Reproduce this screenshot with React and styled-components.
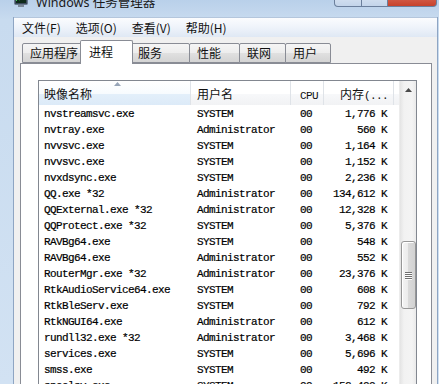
import React from 'react'
import styled, { createGlobalStyle } from 'styled-components'

const GlobalStyle = createGlobalStyle`
  html, body {
    margin: 0;
    padding: 0;
  }
  body {
    width: 439px;
    height: 384px;
    overflow: hidden;
    background: #cadcf0;
  }
`

const Window = styled.div`
  width: 439px;
  height: 384px;
  overflow: hidden;
  display: flex;
  flex-direction: column;
  background: linear-gradient(180deg, #b9d0ea 0px, #c8dbef 20px, #d2e2f3 100%);
  font-family: "Noto Sans CJK SC", sans-serif;
`

const TitleBar = styled.div`
  flex: none;
  height: 17px;
  display: flex;
  align-items: flex-start;
  padding-left: 14px;
  overflow: hidden;
`

const AppIcon = styled.svg`
  flex: none;
  margin-top: -6px;
`

const Title = styled.div`
  margin: -6px 0 0 8px;
  font-family: "Noto Sans", "Noto Sans CJK SC", sans-serif;
  font-size: 12.5px;
  line-height: 17px;
  color: #1b1b1b;
  white-space: nowrap;
`

const Controls = styled.div`
  margin: -13px 2px 0 auto;
  height: 20px;
  display: flex;
`

const CtrlButton = styled.div`
  width: ${p => p.w}px;
  box-sizing: border-box;
  border: 1px solid #6b7f9c;
  border-top: none;
  margin-left: -1px;
  background: ${p => p.close
    ? 'linear-gradient(180deg, #e9a899 0%, #d5634f 50%, #c7422c 100%)'
    : 'linear-gradient(180deg, #e9f0f9 0%, #d6e2f1 50%, #c3d4ea 100%)'};
  border-radius: ${p => p.first ? '0 0 0 4px' : p.close ? '0 0 4px 0' : '0'};
`

const Client = styled.div`
  flex: 1;
  min-height: 0;
  margin: 0 1px 0 13px;
  border-left: 1px solid #8ea5c3;
  border-right: 1px solid #8ea5c3;
  background: #f0f0f0;
  display: flex;
  flex-direction: column;
`

const MenuBar = styled.div`
  flex: none;
  height: 19px;
  display: flex;
  align-items: center;
  gap: 15px;
  padding-left: 8px;
  border-top: 1px solid #b4c6dc;
  background: linear-gradient(180deg, #fbfcfe 0%, #eef3fa 50%, #dfe8f4 100%);
`

const MenuItem = styled.span`
  font-size: 12px;
  line-height: 19px;
  color: #111;
`

const Body = styled.div`
  flex: 1;
  min-height: 0;
  display: flex;
  flex-direction: column;
  padding: 3px 5px 0 6px;
`

const TabStrip = styled.div`
  flex: none;
  height: 23px;
  display: flex;
  align-items: flex-end;
  padding-left: 2px;
`

const Tab = styled.div`
  position: relative;
  box-sizing: border-box;
  width: ${p => (p.active ? p.w + 4 : p.w)}px;
  height: ${p => (p.active ? 24 : 20)}px;
  margin: ${p => (p.active ? '0 -3px -1px -2px' : '0 -1px 0 0')};
  padding: ${p => (p.active ? '0 0 2px 8px' : '0 0 0 7px')};
  border: 1px solid #898c95;
  border-bottom: ${p => (p.active ? 'none' : '1px solid #898c95')};
  border-radius: 2px 2px 0 0;
  background: ${p => p.active
    ? '#ffffff'
    : 'linear-gradient(180deg, #f5f5f5 0%, #ededed 50%, #e0e0e0 51%, #d4d4d4 100%)'};
  z-index: ${p => (p.active ? 1 : 0)};
  font-size: 12px;
  line-height: ${p => (p.active ? 21 : 18)}px;
  color: #111;
  white-space: nowrap;
`

const Panel = styled.div`
  flex: 1;
  min-height: 0;
  display: flex;
  flex-direction: column;
  padding: 16px 14px 0 17px;
  border: 1px solid #898c95;
  border-bottom: none;
  background: #ffffff;
`

const ListView = styled.div`
  flex: 1;
  min-height: 0;
  display: grid;
  grid-template-columns: 1fr 17px;
  border: 1px solid #828790;
  border-bottom: none;
  overflow: hidden;
`

const Table = styled.div`
  display: flex;
  flex-direction: column;
  min-width: 0;
`

const columns = '152px 100px 33px 70px 1fr'

const HeaderRow = styled.div`
  flex: none;
  height: 24px;
  display: grid;
  grid-template-columns: ${columns};
`

const HeaderCell = styled.div`
  display: flex;
  flex-direction: column;
  box-sizing: border-box;
  border-right: ${p => (p.last ? 'none' : '1px solid #dfe3e8')};
  padding: ${p => (p.right ? '0 5px 0 0' : `0 0 0 ${p.pad}px`)};
  text-align: ${p => (p.right ? 'right' : 'left')};
  background: ${p => p.sorted
    ? 'linear-gradient(180deg, #ffffff 0%, #f7fbfe 55%, #e3effa 56%, #dceaf8 100%)'
    : 'linear-gradient(180deg, #ffffff 0%, #ffffff 55%, #f7f8fa 56%, #f1f2f4 100%)'};
`

const SortSlot = styled.div`
  height: 5px;
  display: flex;
  justify-content: center;
  align-items: flex-end;
`

const HeaderText = styled.div`
  font-size: 12px;
  line-height: 16px;
  color: #111;
  white-space: nowrap;
`

const Mono = styled.span`
  font-family: "Liberation Mono", monospace;
  font-size: 11px;
  letter-spacing: -0.6px;
`

const Rows = styled.div`
  padding-top: 1px;
`

const Row = styled.div`
  height: 16px;
  display: grid;
  grid-template-columns: ${columns};
  font-family: "Liberation Mono", "Noto Sans CJK SC", monospace;
  font-size: 11px;
  letter-spacing: -0.6px;
  line-height: 16px;
  color: #000;
  -webkit-text-stroke: 0.2px #000;
`

const Cell = styled.div`
  white-space: nowrap;
  overflow: hidden;
  padding: ${p => (p.right ? '0 7px 0 0' : `0 0 0 ${p.pad}px`)};
  text-align: ${p => (p.right ? 'right' : 'left')};
`

const ScrollBar = styled.div`
  display: flex;
  flex-direction: column;
  align-items: center;
  background: linear-gradient(90deg, #e4e4e4 0%, #f2f2f2 25%, #f4f4f4 75%, #eaeaea 100%);
  border-left: 1px solid #ececec;
`

const ScrollButton = styled.div`
  flex: none;
  width: 100%;
  height: 17px;
  display: flex;
  align-items: center;
  justify-content: center;
`

const Thumb = styled.div`
  flex: none;
  box-sizing: border-box;
  width: 15px;
  height: 68px;
  margin-top: ${p => p.offset}px;
  border: 1px solid #979797;
  border-radius: 3px;
  background: linear-gradient(90deg, #f4f4f4 0%, #ececec 45%, #dadada 50%, #d2d2d2 100%);
  box-shadow: inset 1px 1px 0 #ffffff;
  display: flex;
  flex-direction: column;
  align-items: center;
  justify-content: center;
  gap: 1px;
`

const Grip = styled.div`
  width: 7px;
  height: 1px;
  background: #6f6f6f;
  box-shadow: 0 1px 0 #fdfdfd;
`

const processes = [
  ['nvstreamsvc.exe', 'SYSTEM', '00', '1,776 K'],
  ['nvtray.exe', 'Administrator', '00', '560 K'],
  ['nvvsvc.exe', 'SYSTEM', '00', '1,164 K'],
  ['nvvsvc.exe', 'SYSTEM', '00', '1,152 K'],
  ['nvxdsync.exe', 'SYSTEM', '00', '2,236 K'],
  ['QQ.exe *32', 'Administrator', '00', '134,612 K'],
  ['QQExternal.exe *32', 'Administrator', '00', '12,328 K'],
  ['QQProtect.exe *32', 'SYSTEM', '00', '5,376 K'],
  ['RAVBg64.exe', 'SYSTEM', '00', '548 K'],
  ['RAVBg64.exe', 'Administrator', '00', '552 K'],
  ['RouterMgr.exe *32', 'Administrator', '00', '23,376 K'],
  ['RtkAudioService64.exe', 'SYSTEM', '00', '608 K'],
  ['RtkBleServ.exe', 'SYSTEM', '00', '792 K'],
  ['RtkNGUI64.exe', 'Administrator', '00', '612 K'],
  ['rundll32.exe *32', 'Administrator', '00', '3,468 K'],
  ['services.exe', 'SYSTEM', '00', '5,696 K'],
  ['smss.exe', 'SYSTEM', '00', '492 K'],
  ['spoolsv.exe', 'SYSTEM', '00', '152,400 K'],
]

const tabs = [
  { label: '应用程序', w: 61 },
  { label: '进程', w: 49, active: true },
  { label: '服务', w: 60 },
  { label: '性能', w: 51 },
  { label: '联网', w: 47 },
  { label: '用户', w: 46 },
]

const menus = ['文件(F)', '选项(O)', '查看(V)', '帮助(H)']

function TaskIcon() {
  return (
    <AppIcon width="14" height="14" viewBox="0 0 14 14">
      <rect x="0.5" y="0.5" width="13" height="10" rx="1" fill="#3c4a5c" stroke="#6b7a8e" />
      <rect x="2" y="2" width="10" height="7" fill="#0f2a1a" />
      <polyline points="2,7 4,5 6,6 8,3 10,5 12,4" fill="none" stroke="#46d35a" strokeWidth="1" />
      <rect x="4" y="11" width="6" height="2" fill="#7c8898" />
    </AppIcon>
  )
}

class App extends React.Component {
  render() {
    return (
      <Window>
        <GlobalStyle />
        <TitleBar>
          <TaskIcon />
          <Title>Windows 任务管理器</Title>
          <Controls>
            <CtrlButton w={28} first />
            <CtrlButton w={27} />
            <CtrlButton w={50} close />
          </Controls>
        </TitleBar>

        <Client>
          <MenuBar>
            {menus.map(m => <MenuItem key={m}>{m}</MenuItem>)}
          </MenuBar>

          <Body>
            <TabStrip>
              {tabs.map(t => (
                <Tab key={t.label} w={t.w} active={t.active}>{t.label}</Tab>
              ))}
            </TabStrip>

            <Panel>
              <ListView>
                <Table>
                  <HeaderRow>
                    <HeaderCell pad={5} sorted>
                      <SortSlot>
                        <svg width="7" height="4" viewBox="0 0 7 4">
                          <polygon points="0,4 3.5,0 7,4" fill="#97a5b8" />
                        </svg>
                      </SortSlot>
                      <HeaderText>映像名称</HeaderText>
                    </HeaderCell>
                    <HeaderCell pad={6}>
                      <SortSlot />
                      <HeaderText>用户名</HeaderText>
                    </HeaderCell>
                    <HeaderCell pad={9}>
                      <SortSlot />
                      <HeaderText><Mono>CPU</Mono></HeaderText>
                    </HeaderCell>
                    <HeaderCell right>
                      <SortSlot />
                      <HeaderText>内存<Mono>(...</Mono></HeaderText>
                    </HeaderCell>
                    <HeaderCell last />
                  </HeaderRow>

                  <Rows>
                    {processes.map((p, i) => (
                      <Row key={i}>
                        <Cell pad={5}>{p[0]}</Cell>
                        <Cell pad={6}>{p[1]}</Cell>
                        <Cell pad={9}>{p[2]}</Cell>
                        <Cell right>{p[3]}</Cell>
                        <Cell />
                      </Row>
                    ))}
                  </Rows>
                </Table>

                <ScrollBar>
                  <ScrollButton>
                    <svg width="7" height="4" viewBox="0 0 7 4">
                      <polygon points="0,4 3.5,0 7,4" fill="#4a4a4a" />
                    </svg>
                  </ScrollButton>
                  <Thumb offset={143}>
                    <Grip />
                    <Grip />
                    <Grip />
                    <Grip />
                  </Thumb>
                </ScrollBar>
              </ListView>
            </Panel>
          </Body>
        </Client>
      </Window>
    )
  }
}

export default App
